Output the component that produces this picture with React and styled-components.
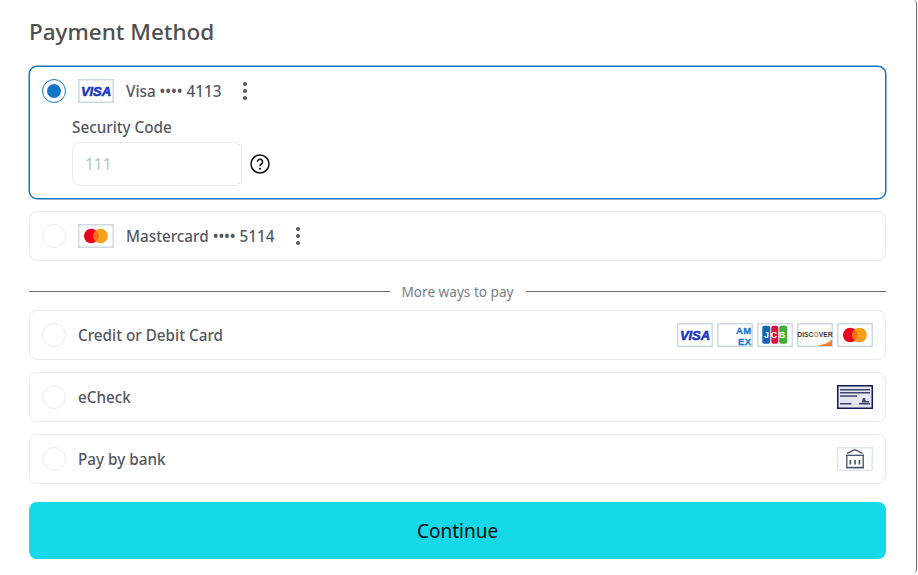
import React from "react";
import styled, { createGlobalStyle } from "styled-components";

const Global = createGlobalStyle`
  html, body { margin: 0; padding: 0; background: #fff; }
  body { font-family: "Noto Sans", "Open Sans", sans-serif; overflow: hidden; }
  * { box-sizing: border-box; }
`;

const Frame = styled.div`
  width: 917px;
  height: 573px;
  background: #fff;
  border-right: 1px solid #6b6b78;
  border-top-right-radius: 4px;
  border-bottom-right-radius: 4px;
  padding: 15px 30px 0 29px;
`;

const Title = styled.h1`
  margin: 0 0 17px;
  font-size: 22.5px;
  line-height: 34px;
  font-weight: 500;
  color: #4f4f4f;
`;

const Card = styled.div`
  border: 1px solid ${(p) => (p.$selected ? "#0f75c4" : "#e9eaec")};
  border-radius: 8px;
  background: #fff;
  margin-bottom: 12px;
  ${(p) => p.$selected && "box-shadow: 0 0 0 0.5px #0f75c4;"}
`;

const Row = styled.div`
  height: 48px;
  display: flex;
  align-items: center;
  padding: 0 12px;
`;

const Radio = styled.span`
  width: 24px;
  height: 24px;
  flex: none;
  border-radius: 50%;
  border: 1px solid ${(p) => (p.$on ? "#0f75c4" : "#e9eaec")};
  display: flex;
  align-items: center;
  justify-content: center;
  margin-right: 12px;
  &::after {
    content: "";
    display: ${(p) => (p.$on ? "block" : "none")};
    width: 14px;
    height: 14px;
    border-radius: 50%;
    background: #0f75c4;
  }
`;

const LogoBox = styled.svg`
  width: 36px;
  height: 24px;
  flex: none;
  display: block;
`;

const SavedLabel = styled.span`
  margin-left: 12px;
  font-size: 15.25px;
  font-weight: 500;
  color: #535762;
  white-space: nowrap;
`;

const MethodLabel = styled.span`
  font-size: 15.25px;
  font-weight: 500;
  color: #535762;
  white-space: nowrap;
`;

const Kebab = styled.svg`
  width: 6px;
  height: 20px;
  margin-left: 21px;
  flex: none;
`;

const Logos = styled.div`
  margin-left: auto;
  display: flex;
  gap: 4px;
`;

const Fields = styled.div`
  padding: 2px 0 12px 42px;
`;

const FieldLabel = styled.div`
  font-size: 15.25px;
  line-height: 20px;
  font-weight: 500;
  color: #535762;
  margin-bottom: 5px;
`;

const FieldRow = styled.div`
  display: flex;
  align-items: center;
  gap: 8px;
`;

const Input = styled.input`
  width: 170px;
  height: 44px;
  border: 1px solid #e9eaec;
  border-radius: 8px;
  padding: 0 12px;
  font: 400 15.5px "Noto Sans", sans-serif;
  color: #535762;
  outline: none;
  &::placeholder { color: #b4bfcb; opacity: 1; }
`;

const Help = styled.svg`
  width: 20px;
  height: 20px;
  flex: none;
`;

const Divider = styled.div`
  display: flex;
  align-items: center;
  height: 20px;
  margin: 20px 0 9px;
  &::before, &::after {
    content: "";
    flex: 1;
    height: 1px;
    background: #6b6b78;
  }
`;

const DividerText = styled.span`
  padding: 0 12px;
  font-size: 13.6px;
  color: #74808c;
`;

const Continue = styled.button`
  display: block;
  width: 100%;
  height: 57px;
  margin-top: 18px;
  border: 0;
  border-radius: 8px;
  background: #15d8e8;
  color: #0c0c0c;
  font: 400 19px "Noto Sans", sans-serif;
`;

const SANS = "'Liberation Sans', sans-serif";

const Frm = ({ children, stroke = "#cfd9e6" }) => (
  <LogoBox viewBox="0 0 36 24">
    <rect x="0.75" y="0.75" width="34.5" height="22.5" fill="#fff" stroke={stroke} strokeWidth="1.5" />
    {children}
  </LogoBox>
);

const VisaLogo = () => (
  <Frm>
    <text x="18" y="16.7" textAnchor="middle" fontFamily={SANS} fontStyle="italic" fontWeight="700" fontSize="13" letterSpacing="-0.1" fill="#1a36c4" stroke="#1a36c4" strokeWidth="0.55">VISA</text>
  </Frm>
);

const McLogo = () => (
  <Frm>
    <circle cx="13.3" cy="12" r="7.3" fill="#eb001b" />
    <circle cx="22.5" cy="12" r="7.3" fill="#f79e1b" />
    <path d="M17.9 6.33A7.3 7.3 0 0 1 17.9 17.67A7.3 7.3 0 0 1 17.9 6.33z" fill="#fb6a0c" />
  </Frm>
);

const AmexLogo = () => (
  <Frm>
    <text x="34.5" y="10.5" textAnchor="end" fontFamily={SANS} fontWeight="700" fontSize="9.5" letterSpacing="0.4" fill="#1478cf" stroke="#1478cf" strokeWidth="0.3">AM</text>
    <text x="34.5" y="21.5" textAnchor="end" fontFamily={SANS} fontWeight="700" fontSize="9.5" letterSpacing="0.4" fill="#1478cf" stroke="#1478cf" strokeWidth="0.3">EX</text>
  </Frm>
);

const JcbLogo = () => (
  <Frm>
    <rect x="5.3" y="2.7" width="8" height="18" rx="2" fill="#1464b4" />
    <rect x="14.3" y="2.7" width="7" height="18" rx="2" fill="#e0103f" />
    <rect x="22.2" y="2.7" width="8" height="18" rx="2" fill="#3fae3c" />
    <text x="18.5" y="15" textAnchor="middle" fontFamily={SANS} fontWeight="700" fontSize="9" letterSpacing="1.6" fill="#fff">JCB</text>
  </Frm>
);

const DiscoverLogo = () => (
  <Frm>
    <path d="M20 23 Q30 21 35 16.5 V23 Z" fill="#f58220" />
    <text x="18" y="13.5" textAnchor="middle" fontFamily={SANS} fontWeight="700" fontSize="6.8" fill="#3a3a3a">DISC<tspan fill="#f58220">O</tspan>VER</text>
  </Frm>
);

const CheckLogo = () => (
  <LogoBox viewBox="0 0 36 24">
    <rect x="0.75" y="0.75" width="34.5" height="22.5" fill="#e4e5ef" stroke="#121b4f" strokeWidth="1.5" />
    <g fill="#3a4570">
      <rect x="3" y="4" width="30" height="1.5" />
      <rect x="3" y="7" width="30" height="1.5" />
      <rect x="3" y="10.3" width="17" height="1.5" />
      <rect x="3" y="18" width="11.5" height="1.5" />
      <rect x="22" y="18" width="11" height="1.5" />
      <path d="M24.5 17.5l1.5-4.5h1.8l1 3h3.2v1.5z" />
    </g>
  </LogoBox>
);

const BankLogo = () => (
  <Frm stroke="#dfe6ee">
    <g fill="none" stroke="#444e66" strokeWidth="1.3">
      <path d="M10 6.3 L18 2.6 L25.6 6.3" />
      <path d="M9 8.3 H27" />
      <path d="M9.8 8.3 V20.5 M26.2 8.3 V20.5" />
      <path d="M9 20.6 H27" strokeWidth="1.6" />
      <path d="M13.4 13 V17.5 M18 13 V17.5 M22.4 13 V17.5" strokeWidth="1.6" />
    </g>
  </Frm>
);

const KebabIcon = () => (
  <Kebab viewBox="0 0 6 20">
    <circle cx="3" cy="3" r="2" fill="#535762" />
    <circle cx="3" cy="10" r="2" fill="#535762" />
    <circle cx="3" cy="17" r="2" fill="#535762" />
  </Kebab>
);

const HelpIcon = () => (
  <Help viewBox="0 0 20 20">
    <circle cx="10" cy="10" r="9" fill="none" stroke="#111" strokeWidth="1.5" />
    <path d="M7.4 7.8a2.6 2.6 0 1 1 4 2.2c-.9.6-1.4 1-1.4 2.2" fill="none" stroke="#111" strokeWidth="1.5" />
    <circle cx="10" cy="14.8" r="1" fill="#111" />
  </Help>
);

export default function App() {
  return (
    <Frame>
      <Global />
      <Title>Payment Method</Title>
      <Card $selected>
        <Row>
          <Radio $on />
          <VisaLogo />
          <SavedLabel>Visa •••• 4113</SavedLabel>
          <KebabIcon />
        </Row>
        <Fields>
          <FieldLabel>Security Code</FieldLabel>
          <FieldRow>
            <Input placeholder="111" />
            <HelpIcon />
          </FieldRow>
        </Fields>
      </Card>
      <Card>
        <Row>
          <Radio />
          <McLogo />
          <SavedLabel>Mastercard •••• 5114</SavedLabel>
          <KebabIcon />
        </Row>
      </Card>
      <Divider>
        <DividerText>More ways to pay</DividerText>
      </Divider>
      <Card>
        <Row>
          <Radio />
          <MethodLabel>Credit or Debit Card</MethodLabel>
          <Logos>
            <VisaLogo />
            <AmexLogo />
            <JcbLogo />
            <DiscoverLogo />
            <McLogo />
          </Logos>
        </Row>
      </Card>
      <Card>
        <Row>
          <Radio />
          <MethodLabel>eCheck</MethodLabel>
          <Logos>
            <CheckLogo />
          </Logos>
        </Row>
      </Card>
      <Card>
        <Row>
          <Radio />
          <MethodLabel>Pay by bank</MethodLabel>
          <Logos>
            <BankLogo />
          </Logos>
        </Row>
      </Card>
      <Continue>Continue</Continue>
    </Frame>
  );
}
